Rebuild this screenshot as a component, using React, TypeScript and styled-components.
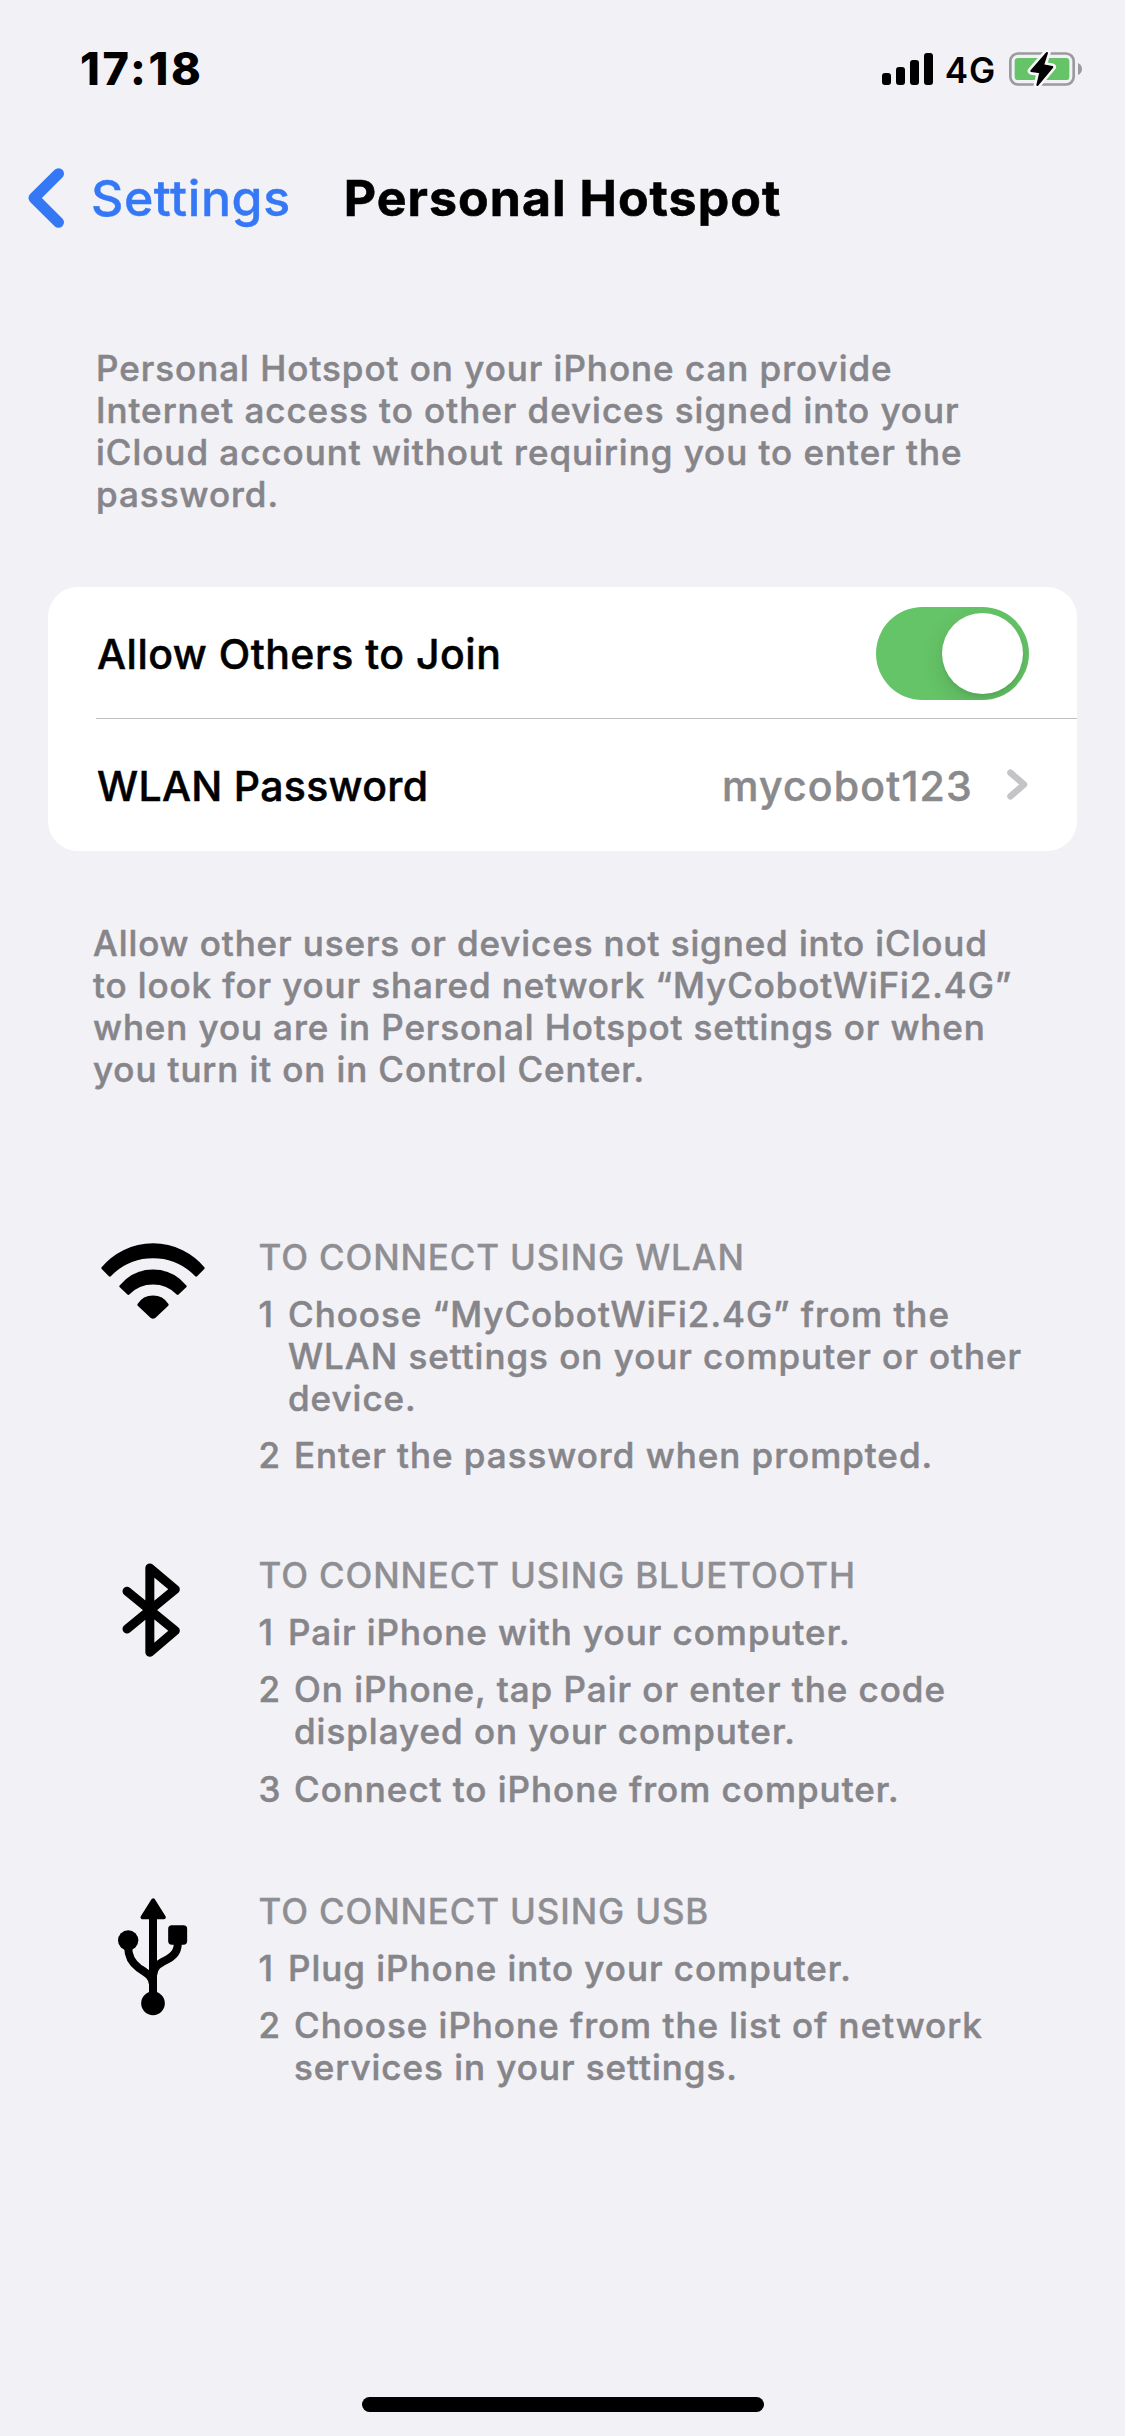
import React from "react";
import styled, { createGlobalStyle } from "styled-components";

const GlobalStyle = createGlobalStyle`
  *, *::before, *::after { box-sizing: border-box; }
  body {
    margin: 0;
    background: #f2f1f6;
    font-family: Inter, "Liberation Sans", sans-serif;
    color: #000;
  }
`;

const Screen = styled.main`
  display: flex;
  flex-direction: column;
  width: 1125px;
  height: 2436px;
  background: #f2f1f6;
`;

const StatusBar = styled.header`
  display: flex;
  justify-content: space-between;
  align-items: flex-start;
  height: 132px;
  padding: 0 42px 0 80px;
`;

const Clock = styled.time`
  margin-top: 47px;
  font-size: 45px;
  line-height: 44px;
  font-weight: 800;
  letter-spacing: 2.6px;
`;

const StatusIcons = styled.div`
  display: flex;
  align-items: center;
  gap: 12px;
  height: 38px;
  margin-top: 50px;
`;

const Carrier = styled.span`
  margin-top: 2px;
  font-size: 35px;
  line-height: 38px;
  font-weight: 600;
  letter-spacing: 0.8px;
`;

const NavBar = styled.nav`
  display: grid;
  grid-template-columns: 1fr auto 1fr;
  align-items: center;
  height: 132px;
  padding: 0 27.5px;
`;

const BackLink = styled.a`
  display: flex;
  align-items: center;
  gap: 27.5px;
  color: #3478f6;
  font-size: 50px;
  line-height: 60px;
  font-weight: 500;
  letter-spacing: 0.6px;
  -webkit-text-stroke: 0.4px currentColor;
`;

const Title = styled.h1`
  margin: 0;
  font-size: 50px;
  line-height: 60px;
  font-weight: 700;
  letter-spacing: 1.05px;
  -webkit-text-stroke: 0.6px currentColor;
`;

const Note = styled.p<{ $top: number; $left: number; $spacing: number }>`
  margin: ${(p) => p.$top}px 105px 0 ${(p) => p.$left}px;
  color: #86858a;
  font-size: 35px;
  line-height: 42px;
  font-weight: 500;
  letter-spacing: ${(p) => p.$spacing}px;
  -webkit-text-stroke: 0.5px currentColor;
`;

const Card = styled.section`
  margin: 72px 48px 0;
  padding-left: 48px;
  border-radius: 30px;
  background: #fff;
`;

const Row = styled.div<{ $divided?: boolean }>`
  display: flex;
  align-items: center;
  height: 132px;
  padding: 2px 48px 0 1px;
  border-bottom: ${(p) => (p.$divided ? "1px solid #c1c1c3" : "none")};
`;

const Label = styled.span<{ $spacing: number }>`
  flex: 1;
  font-size: 41px;
  line-height: 60px;
  font-weight: 500;
  letter-spacing: ${(p) => p.$spacing}px;
  -webkit-text-stroke: 0.5px currentColor;
`;

const Value = styled.span`
  margin-right: 32px;
  color: #8a8a8c;
  font-size: 41px;
  line-height: 60px;
  font-weight: 500;
  letter-spacing: 1.2px;
  -webkit-text-stroke: 0.5px currentColor;
`;

const Switch = styled.button`
  display: flex;
  justify-content: flex-end;
  width: 153px;
  height: 93px;
  padding: 6px;
  border: 0;
  border-radius: 47px;
  background: #65c467;
  overflow: hidden;
`;

const Thumb = styled.span`
  width: 81px;
  height: 81px;
  border-radius: 50%;
  background: #fff;
  box-shadow: 0 8px 22px rgba(0, 0, 0, 0.13), 0 3px 3px rgba(0, 0, 0, 0.05);
`;

const Method = styled.section<{ $top: number }>`
  display: grid;
  grid-template-columns: 212px 1fr;
  margin: ${(p) => p.$top}px 96px 0 46.5px;
  font-size: 35px;
  line-height: 42px;
  font-weight: 500;
  -webkit-text-stroke: 0.5px currentColor;
`;

const IconCell = styled.div`
  display: flex;
  justify-content: center;
  align-items: flex-start;
  height: 0;
`;

const MethodTitle = styled.h2`
  margin: 0;
  color: #8e8e93;
  font: inherit;
  letter-spacing: 0.84px;
  -webkit-text-stroke: 0.3px currentColor;
`;

const Steps = styled.ol`
  margin: 0;
  padding: 0;
  list-style: none;
  color: #86858a;
  letter-spacing: 0.98px;
`;

const Step = styled.li<{ $marker: number; $top: number }>`
  display: grid;
  grid-template-columns: ${(p) => p.$marker}px 1fr;
  margin-top: ${(p) => p.$top}px;
`;

const HomeIndicator = styled.div`
  width: 402px;
  height: 15px;
  margin: auto auto 24px;
  border-radius: 8px;
  background: #000;
`;

const SignalIcon = () => (
  <svg width="51" height="32" viewBox="36 39 153 96">
    <rect x="36" y="99" width="27" height="36" rx="9" />
    <rect x="78" y="81" width="27" height="54" rx="9" />
    <rect x="120" y="60" width="27" height="75" rx="9" />
    <rect x="162" y="39" width="27" height="96" rx="9" />
  </svg>
);

const bolt = "M531 39 L484 93 L511 97 L502 135 L547 81 L519 76 Z";

const BatteryIcon = () => (
  <svg width="75" height="38" viewBox="414 30 225 114">
    <rect x="421" y="40.500" width="190" height="93" rx="23" fill="none" stroke="#9b9a9f" strokeWidth="8" />
    <path d="M624 69 Q636 75 636 87 Q636 99 624 105 Z" fill="#9b9a9f" />
    <rect x="434" y="54" width="164" height="66" rx="10" fill="#65c467" />
    <path d={bolt} fill="#f8f8fb" stroke="#f8f8fb" strokeWidth="22" strokeLinejoin="round" />
    <path d={bolt} stroke="#000" strokeWidth="6" strokeLinejoin="round" />
  </svg>
);

const BackIcon = () => (
  <svg width="36" height="60" viewBox="0 0 36 60" fill="none" stroke="currentColor" strokeWidth="11" strokeLinecap="round" strokeLinejoin="round">
    <path d="M30.500 5.700 L6 30 L30.500 54.300" />
  </svg>
);

const DisclosureIcon = () => (
  <svg width="24" height="34" viewBox="0 0 24 34" fill="none" stroke="#c4c4c6" strokeWidth="6.500" strokeLinecap="round" strokeLinejoin="round">
    <path d="M5.500 3.700 L19 15.500 L5.500 27.300" />
  </svg>
);

const WifiIcon = () => (
  <svg width="110" height="84" viewBox="114 78 330 252" stroke="#000" strokeWidth="8" strokeLinejoin="round">
    <path d="M128 174 A197.500 197.500 0 0 1 430 174 L408.500 196 A178.800 178.800 0 0 0 149.500 196 Z" />
    <path d="M182 229 A125 125 0 0 1 376 229 L353 250.500 A103.800 103.800 0 0 0 205 250.500 Z" />
    <path d="M236 284 A51 51 0 0 1 322 284 L283 321 Q279 324 275 321 Z" />
  </svg>
);

const BluetoothIcon = () => (
  <svg width="110" height="110" viewBox="54 42 330 330" fill="none" stroke="#000" strokeWidth="27" strokeLinecap="round" strokeLinejoin="round">
    <path d="M141 154 L286 272 L209.500 337 L209.500 84 L286 148 L141 267" />
  </svg>
);

const UsbIcon = () => (
  <svg width="110" height="130" viewBox="53.500 60 330 390">
    <path d="M219 91 L187 142 L251 142 Z" stroke="#000" strokeWidth="12" strokeLinejoin="round" />
    <g fill="none" stroke="#000" strokeWidth="24">
      <path d="M218.500 140 V400" />
      <path d="M144 232 C144 262 155 279 176 294 C200 310 217 318 219 345" />
      <path d="M293 218 C293 243 284 255 262 268 C236 282 221 288 219 315" />
    </g>
    <circle cx="218.500" cy="400" r="35.500" />
    <circle cx="144" cy="211" r="30.500" />
    <rect x="264" y="166" width="57" height="58" rx="11" />
  </svg>
);

const methods = [
  {
    title: "TO CONNECT USING WLAN",
    icon: <WifiIcon />,
    top: 146,
    steps: [
      "Choose “MyCobotWiFi2.4G” from the WLAN settings on your computer or other device.",
      "Enter the password when prompted.",
    ],
  },
  {
    title: "TO CONNECT USING BLUETOOTH",
    icon: <BluetoothIcon />,
    top: 78,
    steps: [
      "Pair iPhone with your computer.",
      "On iPhone, tap Pair or enter the code displayed on your computer.",
      "Connect to iPhone from computer.",
    ],
  },
  {
    title: "TO CONNECT USING USB",
    icon: <UsbIcon />,
    top: 80,
    steps: [
      "Plug iPhone into your computer.",
      "Choose iPhone from the list of network services in your settings.",
    ],
  },
];

export default function App() {
  return (
    <>
      <GlobalStyle />
      <Screen>
        <StatusBar>
          <Clock>17:18</Clock>
          <StatusIcons>
            <SignalIcon />
            <Carrier>4G</Carrier>
            <BatteryIcon />
          </StatusIcons>
        </StatusBar>
        <NavBar>
          <BackLink>
            <BackIcon />
            Settings
          </BackLink>
          <Title>Personal Hotspot</Title>
        </NavBar>
        <Note $top={83} $left={96} $spacing={0.98}>
          Personal Hotspot on your iPhone can provide Internet access to other devices signed into your
          iCloud account without requiring you to enter the password.
        </Note>
        <Card>
          <Row $divided>
            <Label $spacing={0.5}>Allow Others to Join</Label>
            <Switch role="switch" aria-checked="true">
              <Thumb />
            </Switch>
          </Row>
          <Row>
            <Label $spacing={0.3}>WLAN Password</Label>
            <Value>mycobot123</Value>
            <DisclosureIcon />
          </Row>
        </Card>
        <Note $top={71} $left={93} $spacing={0.9}>
          Allow other users or devices not signed into iCloud to look for your shared network
          “MyCobotWiFi2.4G” when you are in Personal Hotspot settings or when you turn it on in Control
          Center.
        </Note>
        {methods.map((method) => (
          <Method key={method.title} $top={method.top}>
            <IconCell>{method.icon}</IconCell>
            <div>
              <MethodTitle>{method.title}</MethodTitle>
              <Steps>
                {method.steps.map((step, i) => (
                  <Step key={step} $marker={i === 0 ? 29.5 : 35.5} $top={i === 2 ? 16 : 15}>
                    <span>{i + 1}</span>
                    <span>{step}</span>
                  </Step>
                ))}
              </Steps>
            </div>
          </Method>
        ))}
        <HomeIndicator />
      </Screen>
    </>
  );
}
